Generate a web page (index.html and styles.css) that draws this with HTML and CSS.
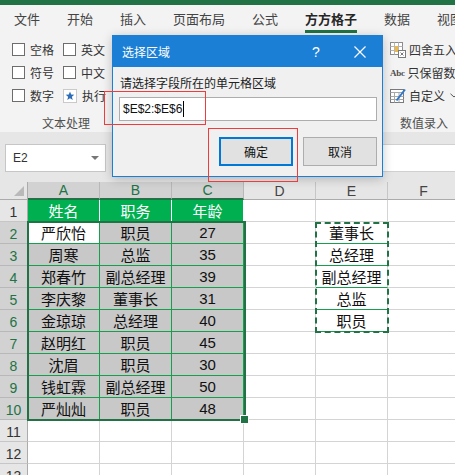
FILE: index.html
```html
<!DOCTYPE html>
<html>
<head>
<meta charset="utf-8">
<title>方方格子</title>
<link rel="stylesheet" href="styles.css">
</head>
<body>
<div class="app">
  <div class="topstrip"></div>
  <div class="tabs">
    <span class="tab">文件</span>
    <span class="tab">开始</span>
    <span class="tab">插入</span>
    <span class="tab">页面布局</span>
    <span class="tab">公式</span>
    <span class="tab active"><span>方方格子</span></span>
    <span class="tab">数据</span>
    <span class="tab">视图</span>
  </div>

  <div class="ribbon">
    <div class="group g1">
      <div class="g1body">
        <div class="col">
          <div class="item"><span class="cb"></span>空格</div>
          <div class="item"><span class="cb"></span>符号</div>
          <div class="item"><span class="cb"></span>数字</div>
        </div>
        <div class="col">
          <div class="item"><span class="cb"></span>英文</div>
          <div class="item"><span class="cb"></span>中文</div>
          <div class="item">
            <svg class="ico" width="14" height="14" viewBox="0 0 14 14"><rect x="0.5" y="0.5" width="13" height="13" fill="#fff" stroke="#9a9a9a" stroke-dasharray="1 1"/><path d="M7 2.6 L8.2 5.6 L11.3 5.8 L8.9 7.8 L9.7 10.9 L7 9.2 L4.3 10.9 L5.1 7.8 L2.7 5.8 L5.8 5.6 Z" fill="#2d6cb8"/></svg>执行<svg class="chev" width="7" height="5" viewBox="0 0 7 5"><path d="M0.5 0.8 L3.5 3.8 L6.5 0.8" fill="none" stroke="#555" stroke-width="1"/></svg>
          </div>
        </div>
      </div>
      <div class="glabel">文本处理</div>
    </div>
    <div class="group gmid"></div>
    <div class="group g2">
      <div class="g2body">
        <div class="item">
          <svg class="ico" width="16" height="16" viewBox="0 0 16 16"><rect x="0.5" y="0.5" width="12" height="12" fill="#fff" stroke="#8c8c8c"/><path d="M0.5 4.5H12.5M0.5 8.5H12.5M4.5 0.5V12.5M8.5 0.5V12.5" stroke="#b5b5b5"/><rect x="5" y="4" width="3" height="6" fill="#e8b84a"/><rect x="8.5" y="8.5" width="7" height="7" fill="#fff" stroke="#7a7a7a"/><path d="M10.5 10.5L13.5 13.5M13.5 10.5L10.5 13.5" stroke="#7a7a7a"/></svg>四舍五入
        </div>
        <div class="item"><span class="abc">Abc</span>只保留数值</div>
        <div class="item">
          <svg class="ico" width="16" height="16" viewBox="0 0 16 16"><rect x="0.5" y="1.5" width="13" height="13" fill="#fff" stroke="#7a7a7a"/><path d="M0.5 4.5H13.5M0.5 8.5H13.5M0.5 11.5H13.5M4.5 4.5V14.5M9 4.5V14.5" stroke="#a8a8a8"/><path d="M6.5 12.5 L15 1.5" stroke="#2f78c8" stroke-width="2"/></svg>自定义<svg class="chev" width="8" height="5" viewBox="0 0 8 5"><path d="M0.5 0.8 L4 4 L7.5 0.8" fill="none" stroke="#555" stroke-width="1"/></svg>
        </div>
      </div>
      <div class="glabel">数值录入</div>
    </div>
  </div>

  <div class="fbar">
    <div class="namebox"><span>E2</span><span class="tri"></span></div>
    <div class="finput"></div>
  </div>

  <div class="sheet">
    <div class="corner"><span class="cornertri"></span></div>
    <div class="ch sel">A</div><div class="ch sel">B</div><div class="ch sel">C</div><div class="ch">D</div><div class="ch">E</div><div class="ch">F</div>

    <div class="rh">1</div>
    <div class="hd">姓名</div><div class="hd">职务</div><div class="hd">年龄</div><div class="c"></div><div class="c"></div><div class="c"></div>

    <div class="rh sel">2</div>
    <div class="td act">严欣怡</div><div class="td">职员</div><div class="td num">27</div><div class="c"></div><div class="c ec">董事长</div><div class="c"></div>

    <div class="rh sel">3</div>
    <div class="td">周寒</div><div class="td">总监</div><div class="td num">35</div><div class="c"></div><div class="c ec">总经理</div><div class="c"></div>

    <div class="rh sel">4</div>
    <div class="td">郑春竹</div><div class="td">副总经理</div><div class="td num">39</div><div class="c"></div><div class="c ec">副总经理</div><div class="c"></div>

    <div class="rh sel">5</div>
    <div class="td">李庆黎</div><div class="td">董事长</div><div class="td num">31</div><div class="c"></div><div class="c ec">总监</div><div class="c"></div>

    <div class="rh sel">6</div>
    <div class="td">金琼琼</div><div class="td">总经理</div><div class="td num">40</div><div class="c"></div><div class="c ec">职员</div><div class="c"></div>

    <div class="rh sel">7</div>
    <div class="td">赵明红</div><div class="td">职员</div><div class="td num">45</div><div class="c"></div><div class="c"></div><div class="c"></div>

    <div class="rh sel">8</div>
    <div class="td">沈眉</div><div class="td">职员</div><div class="td num">30</div><div class="c"></div><div class="c"></div><div class="c"></div>

    <div class="rh sel">9</div>
    <div class="td">钱虹霖</div><div class="td">副总经理</div><div class="td num">50</div><div class="c"></div><div class="c"></div><div class="c"></div>

    <div class="rh sel">10</div>
    <div class="td">严灿灿</div><div class="td">职员</div><div class="td num">48</div><div class="c"></div><div class="c"></div><div class="c"></div>

    <div class="rh">11</div>
    <div class="c"></div><div class="c"></div><div class="c"></div><div class="c"></div><div class="c"></div><div class="c"></div>

    <div class="rh">12</div>
    <div class="c"></div><div class="c"></div><div class="c"></div><div class="c"></div><div class="c"></div><div class="c"></div>

    <div class="rh">13</div>
    <div class="c"></div><div class="c"></div><div class="c"></div><div class="c"></div><div class="c"></div><div class="c"></div>
  </div>

  <div class="selection"></div>
  <div class="fillhandle"></div>
  <div class="ants"></div>

  <div class="dialog">
    <div class="dtitle">
      <span class="dname">选择区域</span>
      <span class="dq">?</span>
      <span class="dx"><svg width="12" height="12" viewBox="0 0 12 12"><path d="M0.5 0.5L11.5 11.5M11.5 0.5L0.5 11.5" stroke="#fff" stroke-width="1.2"/></svg></span>
    </div>
    <div class="dbody">
      <div class="dlabel">请选择字段所在的单元格区域</div>
      <div class="dinput"><span>$E$2:$E$6</span><span class="caretline"></span></div>
      <div class="dbtns">
        <div class="btn primary">确定</div>
        <div class="btn">取消</div>
      </div>
    </div>
  </div>

  <div class="mark mark1"></div>
  <div class="mark mark2"></div>
</div>
</body>
</html>
```

FILE: styles.css
```css
html, body {
  margin: 0;
  padding: 0;
  background: #fff;
}

.app {
  position: relative;
  width: 455px;
  height: 475px;
  overflow: hidden;
  background: #fff;
  font-family: "Noto Sans CJK SC", "Liberation Sans", sans-serif;
  color: #222;
}

.topstrip {
  height: 5px;
  background: #217346;
}

/* ---------- tabs ---------- */
.tabs {
  height: 30px;
  background: #f3f3f3;
  display: flex;
  gap: 27px;
  padding-left: 14px;
  font-size: 13px;
  color: #444;
  white-space: nowrap;
}

.tab {
  padding-top: 5px;
  line-height: 18px;
}

.tab.active {
  font-weight: bold;
  color: #262626;
}

.tab.active span {
  display: inline-block;
  padding-bottom: 2px;
  border-bottom: 3px solid #217346;
}

/* ---------- ribbon ---------- */
.ribbon {
  height: 97px;
  background: #f3f3f3;
  display: flex;
  font-size: 12px;
  color: #333;
}

.group {
  box-sizing: border-box;
  padding-top: 3px;
  display: flex;
  flex-direction: column;
  flex: none;
}

.g1 { width: 132px; }
.gmid { width: 256px; }
.g2 { width: 72px; }

.g1body {
  display: flex;
  gap: 9px;
  padding-left: 12px;
}

.g2body {
  display: flex;
  flex-direction: column;
  padding-left: 2px;
}

.col {
  display: flex;
  flex-direction: column;
}

.item {
  height: 23px;
  display: flex;
  align-items: center;
  gap: 5px;
  white-space: nowrap;
  line-height: 16px;
}

.g2 .item { gap: 3px; }

.cb {
  width: 13px;
  height: 13px;
  box-sizing: border-box;
  border: 1px solid #6d6d6d;
  background: #fff;
  flex: none;
}

.ico { flex: none; display: block; }

.chev {
  display: block;
  margin-left: 2px;
}

.abc {
  width: 16px;
  font-family: "Liberation Serif", serif;
  font-weight: bold;
  font-size: 9px;
  letter-spacing: -0.3px;
  color: #4d4d4d;
  text-align: center;
}

.glabel {
  margin-top: 7px;
  line-height: 18px;
  font-size: 12px;
  color: #505050;
  text-align: center;
  white-space: nowrap;
}

/* ---------- formula bar ---------- */
.fbar {
  height: 50px;
  box-sizing: border-box;
  background: #e6e6e6;
  padding: 12px 0 0 5px;
  display: flex;
  gap: 40px;
}

.namebox {
  width: 101px;
  height: 28px;
  box-sizing: border-box;
  border: 1px solid #c6c6c6;
  background: #fff;
  display: flex;
  align-items: center;
  justify-content: space-between;
  padding: 0 6px 0 7px;
  font-family: "Liberation Sans", sans-serif;
  font-size: 12px;
  color: #333;
}

.tri {
  width: 0;
  height: 0;
  border-left: 4px solid transparent;
  border-right: 4px solid transparent;
  border-top: 4px solid #777;
}

.finput {
  flex: 1;
  height: 28px;
  box-sizing: border-box;
  border: 1px solid #d0d0d0;
  border-right: none;
  background: #fff;
}

/* ---------- sheet ---------- */
.sheet {
  display: grid;
  grid-template-columns: 28px repeat(6, 72px);
  grid-template-rows: 18px repeat(13, 22px);
}

.sheet > div {
  box-sizing: border-box;
  display: flex;
  align-items: center;
  justify-content: center;
  overflow: hidden;
  white-space: nowrap;
}

.corner {
  background: #e6e6e6;
  border-right: 1px solid #ababab;
  border-bottom: 1px solid #ababab;
  align-items: flex-end !important;
  justify-content: flex-end !important;
  padding: 0 3px 3px 0;
}

.cornertri {
  width: 0;
  height: 0;
  border-left: 10px solid transparent;
  border-bottom: 10px solid #b9b9b9;
}

.ch {
  background: #e6e6e6;
  border-right: 1px solid #c6c6c6;
  border-bottom: 1px solid #ababab;
  font-family: "Liberation Sans", sans-serif;
  font-size: 14px;
  color: #444;
  line-height: 16px;
}

.ch.sel {
  background: #d2d2d2;
  color: #217346;
  border-bottom: 2px solid #217346;
  border-right-color: #b8b8b8;
}

.rh {
  background: #e6e6e6;
  border-right: 1px solid #ababab;
  border-bottom: 1px solid #c6c6c6;
  font-family: "Liberation Sans", sans-serif;
  font-size: 14px;
  color: #333;
  padding-top: 2px;
}

.rh.sel {
  background: #d2d2d2;
  color: #217346;
  border-bottom-color: #b8b8b8;
}

.c {
  background: #fff;
  border-right: 1px solid #d4d4d4;
  border-bottom: 1px solid #d4d4d4;
}

.sheet > .hd,
.sheet > .td,
.sheet > .ec {
  font-size: 15px;
  line-height: 20px;
  color: #111;
}

.hd {
  background: #00b050;
  color: #fff !important;
  border-right: 1px solid #fff;
  border-bottom: 1px solid #00b050;
}

.td {
  background: #c8c8c8;
  border-right: 1px solid #16a04e;
  border-bottom: 1px solid #16a04e;
}

.td.act { background: #fff; }

.num {
  font-family: "Liberation Sans", sans-serif;
}

.ec {
  border-bottom: 1px solid #16a04e;
}

/* ---------- overlays ---------- */
.selection {
  position: absolute;
  left: 27px;
  top: 221px;
  width: 219px;
  height: 200px;
  box-sizing: border-box;
  border: 2px solid #217346;
}

.fillhandle {
  position: absolute;
  left: 241px;
  top: 416px;
  width: 7px;
  height: 7px;
  box-sizing: border-box;
  background: #217346;
  outline: 1px solid #fff;
}

.ants {
  position: absolute;
  left: 315px;
  top: 222px;
  width: 74px;
  height: 111px;
  box-sizing: border-box;
  border: 2px dashed #217346;
}

/* ---------- dialog ---------- */
.dialog {
  position: absolute;
  left: 112px;
  top: 35px;
  width: 271px;
  height: 142px;
  box-sizing: border-box;
  border: 1px solid #1b7fd6;
  background: #f0f0f0;
  box-shadow: 0 2px 10px rgba(0, 0, 0, 0.22);
}

.dtitle {
  height: 31px;
  background: #1b7fd6;
  color: #fff;
  display: flex;
  align-items: center;
  padding-left: 9px;
  font-size: 12px;
}

.dname { flex: 1; }

.dq {
  width: 30px;
  text-align: center;
  margin-right: 7px;
  font-family: "Liberation Sans", sans-serif;
  font-size: 14px;
}

.dx {
  width: 44px;
  display: flex;
  justify-content: center;
  align-items: center;
}

.dx svg { display: block; }

.dbody {
  padding: 7px 5px 0 6px;
}

.dlabel {
  font-size: 12px;
  line-height: 18px;
  color: #222;
  padding-left: 1px;
}

.dinput {
  margin-top: 5px;
  height: 24px;
  box-sizing: border-box;
  border: 1px solid #adadad;
  background: #fff;
  display: flex;
  align-items: center;
  padding-left: 3px;
  font-family: "Liberation Sans", sans-serif;
  font-size: 12px;
  color: #111;
}

.caretline {
  width: 1px;
  height: 16px;
  background: #000;
  margin-left: 1px;
}

.dbtns {
  margin-top: 16px;
  display: flex;
  justify-content: flex-end;
  gap: 10px;
}

.btn {
  width: 74px;
  height: 29px;
  box-sizing: border-box;
  border: 1px solid #adadad;
  background: #e1e1e1;
  display: flex;
  align-items: center;
  justify-content: center;
  font-size: 12px;
  color: #111;
}

.btn.primary {
  border: 2px solid #0078d7;
}

/* ---------- annotation marks ---------- */
.mark {
  position: absolute;
  box-sizing: border-box;
  border: 1px solid #ee3b3b;
}

.mark1 {
  left: 104px;
  top: 91px;
  width: 102px;
  height: 34px;
}

.mark2 {
  left: 208px;
  top: 128px;
  width: 90px;
  height: 54px;
}
```
